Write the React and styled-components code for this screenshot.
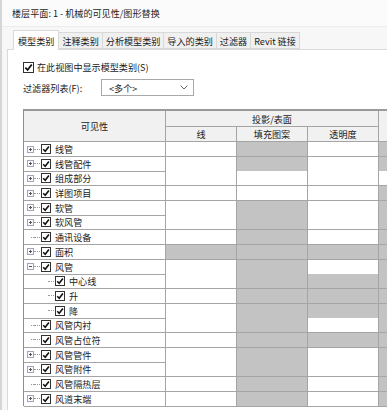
import React from "react";
import styled, { createGlobalStyle } from "styled-components";

const GlobalStyle = createGlobalStyle`
  body {
    margin: 0;
    background: #ffffff;
    font-family: "Noto Sans CJK SC", "Noto Sans", sans-serif;
    color: #1b1b1b;
    overflow: hidden;
  }
`;

const rows = [
  { name: "线管", box: "+", cells: [0, 1, 0, 1] },
  { name: "线管配件", box: "+", cells: [0, 1, 0, 1] },
  { name: "组成部分", box: "+", cells: [0, 0, 0, 0] },
  { name: "详图项目", box: "+", cells: [0, 0, 0, 1] },
  { name: "软管", box: "+", cells: [0, 1, 0, 1] },
  { name: "软风管", box: "+", cells: [0, 1, 0, 1] },
  { name: "通讯设备", box: null, cells: [0, 1, 0, 1] },
  { name: "面积", box: "+", cells: [1, 1, 1, 1] },
  { name: "风管", box: "-", cells: [0, 1, 0, 1] },
  { name: "中心线", child: true, cells: [0, 1, 1, 1] },
  { name: "升", child: true, cells: [0, 1, 1, 1] },
  { name: "降", child: true, cells: [0, 1, 1, 1] },
  { name: "风管内衬", box: null, cells: [0, 1, 0, 1] },
  { name: "风管占位符", box: null, cells: [0, 1, 1, 1] },
  { name: "风管管件", box: "+", cells: [0, 1, 0, 1] },
  { name: "风管附件", box: "+", cells: [0, 1, 0, 1] },
  { name: "风管隔热层", box: null, cells: [0, 1, 0, 1] },
  { name: "风道末端", box: "+", cells: [0, 1, 0, 1] },
];

const tabs = ["模型类别", "注释类别", "分析模型类别", "导入的类别", "过滤器", "Revit 链接"];

const Check = ({ size = 10 }) => (
  <CheckBox $size={size}>
    <svg width={size - 2} height={size - 2} viewBox="0 0 8 8">
      <path d="M1.2 4.2 L3.2 6.2 L6.9 1.4" fill="none" stroke="#111" strokeWidth="1.6" />
    </svg>
  </CheckBox>
);

const App = () => {
  return (
    <Window>
      <GlobalStyle />
      <TitleBar>楼层平面: 1 - 机械的可见性/图形替换</TitleBar>
      <Body>
        <TabStrip>
          {tabs.map((t, i) => (
            <Tab key={t} $active={i === 0}>
              {t}
            </Tab>
          ))}
        </TabStrip>
        <Panel>
          <OptionRow>
            <Check size={11} />
            <span>在此视图中显示模型类别(S)</span>
          </OptionRow>
          <FilterRow>
            <FilterLabel>过滤器列表(F):</FilterLabel>
            <Select>
              <span>&lt;多个&gt;</span>
              <svg width="8" height="5" viewBox="0 0 8 5">
                <path d="M0.5 0.5 L4 4 L7.5 0.5" fill="none" stroke="#555" strokeWidth="0.9" />
              </svg>
            </Select>
          </FilterRow>
          <Grid>
            <Header>
              <HeadCell style={{ gridRow: "1 / 3" }}>可见性</HeadCell>
              <HeadCell style={{ gridColumn: "2 / 5" }}>投影/表面</HeadCell>
              <HeadCell style={{ gridRow: "1 / 3", gridColumn: "5" }} />
              <HeadCell>线</HeadCell>
              <HeadCell>填充图案</HeadCell>
              <HeadCell>透明度</HeadCell>
            </Header>
            {rows.map((r) => (
              <Row key={r.name}>
                <TreeCell $child={r.child}>
                  {!r.child &&
                    (r.box ? (
                      <ExpandBox>
                        <Hbar />
                        {r.box === "+" && <Vbar />}
                      </ExpandBox>
                    ) : (
                      <Slot>
                        <SlotDash />
                      </Slot>
                    ))}
                  {r.child && <Slot />}
                  <Dash />
                  <Check />
                  <Label>{r.name}</Label>
                </TreeCell>
                {r.cells.map((g, j) => (
                  <Cell key={j} $gray={g === 1} />
                ))}
              </Row>
            ))}
          </Grid>
        </Panel>
      </Body>
    </Window>
  );
};

export default App;

const Window = styled.div`
  width: 387px;
  height: 410px;
  overflow: hidden;
  display: flex;
  flex-direction: column;
  box-sizing: border-box;
  border-left: 2px solid #d6d6d6;
  font-size: 9.1px;
`;

const TitleBar = styled.div`
  height: 27px;
  flex-shrink: 0;
  display: flex;
  align-items: center;
  padding-left: 10px;
  background: #fbfbfb;
  border-bottom: 1px solid #ececec;
  box-sizing: border-box;
`;

const Body = styled.div`
  flex: 1;
  display: flex;
  flex-direction: column;
  background: #f7f7f7;
  padding: 2px 0 0 5px;
`;

const TabStrip = styled.div`
  display: flex;
  align-items: flex-end;
  height: 20px;
  padding-left: 6px;
  position: relative;
  z-index: 1;
`;

const Tab = styled.div`
  display: flex;
  align-items: center;
  height: ${(p) => (p.$active ? "20px" : "17px")};
  padding: 0 ${(p) => (p.$active ? "4px" : "3px")};
  margin-bottom: ${(p) => (p.$active ? "-1px" : "0")};
  background: ${(p) => (p.$active ? "#ffffff" : "#f0f0f0")};
  border: 1px solid #d9d9d9;
  border-bottom: ${(p) => (p.$active ? "none" : "1px solid #d9d9d9")};
  border-left: ${(p) => (p.$active ? "1px solid #d9d9d9" : "none")};
  box-sizing: border-box;
  white-space: nowrap;
`;

const Panel = styled.div`
  flex: 1;
  background: #ffffff;
  border-top: 1px solid #d9d9d9;
  border-left: 1px solid #d9d9d9;
  padding: 11px 0 0 15px;
`;

const OptionRow = styled.div`
  display: flex;
  align-items: center;
  gap: 3px;
  height: 12px;
`;

const CheckBox = styled.span`
  width: ${(p) => p.$size}px;
  height: ${(p) => p.$size}px;
  box-sizing: border-box;
  border: 1px solid #333;
  background: #fff;
  display: inline-flex;
  align-items: center;
  justify-content: center;
  flex-shrink: 0;
`;

const FilterRow = styled.div`
  display: flex;
  align-items: center;
  margin-top: 6px;
  height: 17px;
`;

const FilterLabel = styled.span`
  width: 78px;
`;

const Select = styled.div`
  width: 93px;
  height: 17px;
  box-sizing: border-box;
  border: 1px solid #a8a8a8;
  display: flex;
  align-items: center;
  justify-content: space-between;
  padding: 0 5px 0 7px;
`;

const Grid = styled.div`
  margin-top: 13px;
  width: 430px;
  border-left: 1px solid #8f8f8f;
  border-top: 2px solid #9a9a9a;
`;

const columns = "142px 71px 71px 71px 75px";

const Header = styled.div`
  display: grid;
  grid-template-columns: ${columns};
  grid-template-rows: 16px 15px;
`;

const HeadCell = styled.div`
  background: #f1f1f1;
  border-right: 1px solid #a5a5a5;
  border-bottom: 1px solid #a5a5a5;
  box-sizing: border-box;
  display: flex;
  align-items: center;
  justify-content: center;
`;

const Row = styled.div`
  display: grid;
  grid-template-columns: ${columns};
  height: 14.7px;
`;

const Cell = styled.div`
  background: ${(p) => (p.$gray ? "#c3c3c3" : "#ffffff")};
  border-right: 1px solid #a5a5a5;
  border-bottom: 1px solid #a5a5a5;
  box-sizing: border-box;
`;

const TreeCell = styled.div`
  display: flex;
  align-items: center;
  padding-left: ${(p) => (p.$child ? "17px" : "3px")};
  border-right: 1px solid #a5a5a5;
  border-bottom: 1px solid #a5a5a5;
  box-sizing: border-box;
`;

const ExpandBox = styled.span`
  position: relative;
  width: 7px;
  height: 7px;
  box-sizing: border-box;
  border: 1px solid #a3a3bd;
  background: #fafafe;
  flex-shrink: 0;
`;

const Hbar = styled.span`
  position: absolute;
  left: 1px;
  top: 2px;
  width: 3px;
  height: 1px;
  background: #555;
`;

const Vbar = styled.span`
  position: absolute;
  left: 2px;
  top: 1px;
  width: 1px;
  height: 3px;
  background: #555;
`;

const Slot = styled.span`
  width: 7px;
  height: 7px;
  display: flex;
  align-items: center;
  justify-content: flex-end;
  flex-shrink: 0;
`;

const SlotDash = styled.span`
  width: 3px;
  border-top: 1px dotted #9a9a9a;
`;

const Dash = styled.span`
  width: 6px;
  margin-right: 1px;
  border-top: 1px dotted #9a9a9a;
  flex-shrink: 0;
`;

const Label = styled.span`
  margin-left: 4px;
  white-space: nowrap;
`;
